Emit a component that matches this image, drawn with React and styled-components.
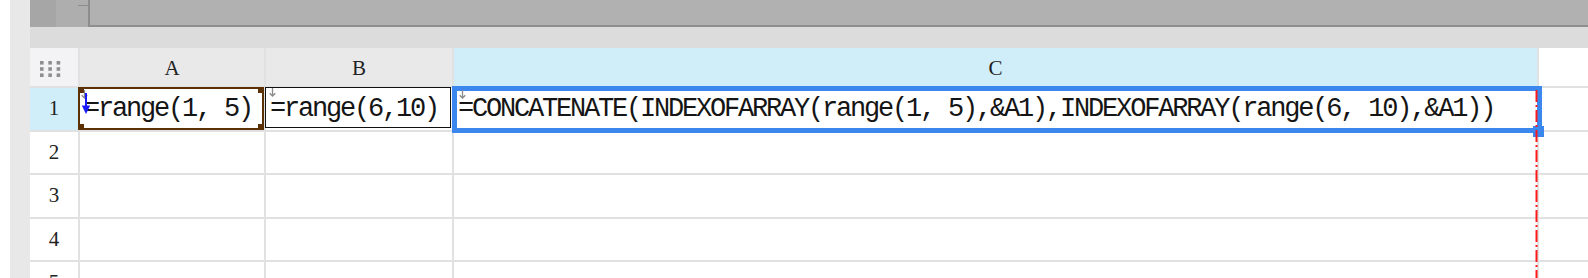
import React from "react";
import styled, { createGlobalStyle, css } from "styled-components";

const GlobalStyle = createGlobalStyle`
  html, body { margin: 0; padding: 0; background: #fff; }
  body { font-family: "Liberation Serif", serif; overflow: hidden; }
`;

const Page = styled.div`
  display: flex;
  width: 1588px;
  height: 278px;
  overflow: hidden;
  background: #fff;
`;

const Gutter = styled.div`
  width: 10px;
  flex: none;
  background: #fff;
`;

const SideRail = styled.div`
  width: 20px;
  flex: none;
  background: #e8e8e8;
`;

const Main = styled.div`
  flex: 1;
  display: flex;
  flex-direction: column;
  min-width: 0;
`;

const TopBar = styled.div`
  height: 27px;
  flex: none;
  display: flex;
`;

const BarSegment = styled.div`
  width: ${(p) => p.$w}px;
  flex: none;
  background: ${(p) => p.$bg};
  position: relative;
`;

const Tick = styled.span`
  position: absolute;
  right: 0;
  top: 5px;
  width: 10px;
  height: 1px;
  background: #8c8c8c;
`;

const FormulaBox = styled.div`
  flex: 1;
  background: #b1b1b1;
  border-left: 2px solid #8d8d8d;
  border-bottom: 2px solid #8f8f8f;
`;

const Band = styled.div`
  height: 21px;
  flex: none;
  background: #dcdcdc;
`;

const SheetArea = styled.div`
  position: relative;
  flex: 1;
`;

const Grid = styled.div`
  display: grid;
  grid-template-columns: 48px 184px 186px 1083px 1fr;
  grid-template-rows: 38px repeat(5, 41.5px);
  gap: 2px;
  background: #e1e1e1;
`;

const Corner = styled.div`
  background: #f3f3f5;
  display: flex;
  align-items: center;
  padding-left: 10px;
  padding-top: 5px;
`;

const headerBg = { plain: "#e9e9e9", active: "#cfeef9", blank: "#ffffff" };

const ColHeader = styled.div`
  background: ${(p) => headerBg[p.$tone || "plain"]};
  display: flex;
  align-items: center;
  justify-content: center;
  font-family: "Liberation Serif", serif;
  font-size: 21px;
  color: #222;
  padding-top: 3px;
`;

const RowHeader = styled.div`
  background: ${(p) => (p.$active ? "#d0eef9" : "#ffffff")};
  display: flex;
  align-items: center;
  justify-content: center;
  font-family: "Liberation Serif", serif;
  font-size: 21px;
  color: #222;
`;

const Cell = styled.div`
  background: #fff;
  position: relative;
  display: flex;
  align-items: center;
  padding-left: 4px;
  min-width: 0;
`;

const CellText = styled.span`
  font-family: "Liberation Mono", monospace;
  font-size: 27px;
  letter-spacing: -2.2px;
  white-space: pre;
  color: #151515;
  line-height: 40px;
`;

const frameStyles = {
  ref: css`
    top: -1px;
    left: -2px;
    right: 0px;
    bottom: 0px;
    border: 2.5px solid #5c3105;
  `,
  dep: css`
    top: -1px;
    left: -1px;
    right: 1px;
    bottom: 1.5px;
    border: 1.5px solid #111;
  `,
  active: css`
    top: -2px;
    left: -2px;
    right: -5px;
    bottom: -3.5px;
    border: 5px solid #3b87ee;
  `,
};

const Frame = styled.div`
  position: absolute;
  box-sizing: border-box;
  pointer-events: none;
  z-index: 2;
  ${(p) => frameStyles[p.$variant]}
`;

const cornerPos = {
  tl: css`top: -1px; left: -1px;`,
  tr: css`top: -1px; right: -1px;`,
  bl: css`bottom: -1px; left: -1px;`,
  br: css`bottom: -1px; right: -1px;`,
};

const FrameCorner = styled.span`
  position: absolute;
  width: 5px;
  height: 5px;
  background: #5c3105;
  ${(p) => cornerPos[p.$pos]}
`;

const FillHandle = styled.span`
  position: absolute;
  right: -7px;
  bottom: -7.5px;
  width: 11px;
  height: 11px;
  background: #3b87ee;
  z-index: 3;
`;

const RefMark = styled.svg`
  position: absolute;
  left: ${(p) => p.$left}px;
  top: ${(p) => p.$top}px;
  z-index: 3;
`;

const BreakLine = styled.svg`
  position: absolute;
  left: 1505px;
  top: 42px;
  z-index: 4;
`;

const GridDots = () => (
  <svg width="22" height="18" viewBox="0 0 22 18">
    {[0, 1, 2].map((r) =>
      [0, 1, 2].map((c) => (
        <rect key={`${r}-${c}`} x={c * 8.3} y={r * 6.2} width="3.6" height="3.6" fill="#8f8f8f" />
      ))
    )}
  </svg>
);

const SmallArrow = ({ left = 1, top = 0 }) => (
  <RefMark $left={left} $top={top} width="7" height="9" viewBox="0 0 7 9">
    <path d="M3.5 0 V8 M0.7 5.2 L3.5 8 L6.3 5.2" stroke="#8a8a8a" strokeWidth="1.3" fill="none" />
  </RefMark>
);

const BlueArrow = () => (
  <RefMark $left={1} $top={5} width="10" height="22" viewBox="0 0 10 22">
    <path d="M5 0 V14" stroke="#1a1aff" strokeWidth="2" />
    <path d="M0.8 12.5 L9.2 12.5 L5 21 Z" fill="#1a1aff" />
  </RefMark>
);

const rows = [2, 3, 4, 5];

export default function App() {
  return (
    <>
      <GlobalStyle />
      <Page>
        <Gutter />
        <SideRail />
        <Main>
          <TopBar>
            <BarSegment $w={26} $bg="#a6a6a6" />
            <BarSegment $w={32} $bg="#aeaeae">
              <Tick />
            </BarSegment>
            <FormulaBox />
          </TopBar>
          <Band />
          <SheetArea>
            <Grid>
              <Corner>
                <GridDots />
              </Corner>
              <ColHeader>A</ColHeader>
              <ColHeader>B</ColHeader>
              <ColHeader $tone="active">C</ColHeader>
              <ColHeader $tone="blank" />

              <RowHeader $active>1</RowHeader>
              <Cell>
                <Frame $variant="ref">
                  <FrameCorner $pos="tl" />
                  <FrameCorner $pos="tr" />
                  <FrameCorner $pos="bl" />
                  <FrameCorner $pos="br" />
                </Frame>
                <SmallArrow left={1} top={2} />
                <BlueArrow />
                <CellText>=range(1, 5)</CellText>
              </Cell>
              <Cell>
                <Frame $variant="dep" />
                <SmallArrow left={3} top={0} />
                <CellText>=range(6,10)</CellText>
              </Cell>
              <Cell>
                <Frame $variant="active" />
                <FillHandle />
                <SmallArrow left={5} top={2} />
                <CellText>=CONCATENATE(INDEXOFARRAY(range(1, 5),&amp;A1),INDEXOFARRAY(range(6, 10),&amp;A1))</CellText>
              </Cell>
              <Cell />

              {rows.map((n) => (
                <React.Fragment key={n}>
                  <RowHeader>{n}</RowHeader>
                  <Cell />
                  <Cell />
                  <Cell />
                  <Cell />
                </React.Fragment>
              ))}
            </Grid>
            <BreakLine width="3" height="190" viewBox="0 0 3 190">
              <line x1="1.5" y1="0" x2="1.5" y2="190" stroke="#ff1a1a" strokeWidth="2" strokeDasharray="12 3 2 3" />
            </BreakLine>
          </SheetArea>
        </Main>
      </Page>
    </>
  );
}
